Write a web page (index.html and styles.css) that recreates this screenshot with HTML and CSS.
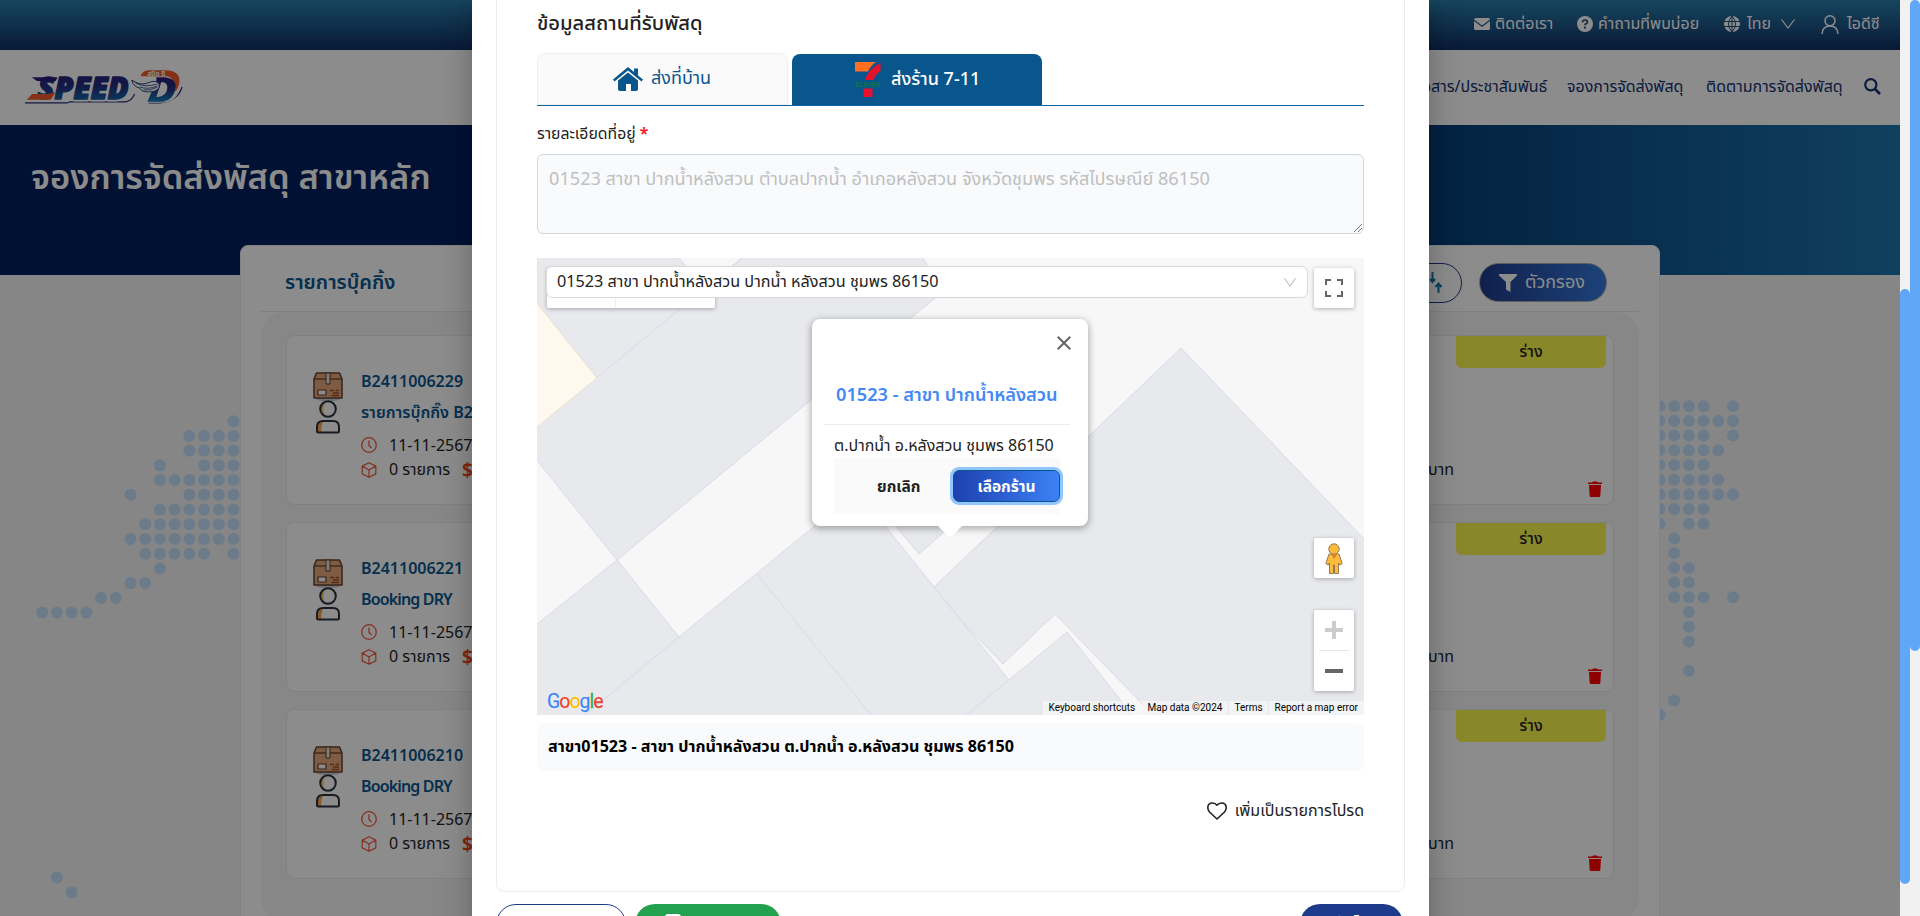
FILE: index.html
```html
<!DOCTYPE html>
<html lang="th">
<head>
<meta charset="utf-8">
<title>SPEED-D</title>
<link rel="stylesheet" href="styles.css">
</head>
<body>
<svg class="defs" width="0" height="0">
  <defs>
    <linearGradient id="ink" x1="0" y1="0" x2="0" y2="1"><stop offset="0" stop-color="#2c1a78"/><stop offset=".5" stop-color="#20307f"/><stop offset="1" stop-color="#1480b8"/></linearGradient>
    <symbol id="parcel" viewBox="0 0 30 29">
      <ellipse cx="15" cy="27" rx="12" ry="2" fill="#c9ccd6"/>
      <path d="M3.5 1h23L29 7v19H1V7z" fill="#e6a77c" stroke="#66402b" stroke-width="1.5" stroke-linejoin="round"/>
      <path d="M1 7h28" stroke="#66402b" stroke-width="1.3"/>
      <path d="M13 1h4v11h-4z" fill="#e8e4da" stroke="#66402b" stroke-width="1"/>
      <path d="M5 18h8v5H5z" fill="#fff" stroke="#66402b" stroke-width="1.2"/>
      <path d="M17 18.500h4m1.500 0H26M20 21h6m-7.500 2.500H26" stroke="#9a4f2c" stroke-width="1.300"/>
    </symbol>
    <symbol id="person" viewBox="0 0 26 34">
      <circle cx="13" cy="9" r="8" fill="#fff"/><path d="M11 1.500a8 8 0 0 0 0 15.200 12 12 0 0 1 0-15.200" fill="#f6c866"/>
      <circle cx="13" cy="9" r="7.800" fill="none" stroke="#2b303d" stroke-width="2"/>
      <path d="M2 31v-4q0-6 6-6h10q6 0 6 6v4q0 1.500-1.500 1.500h-19Q2 32.500 2 31z" fill="#fff"/>
      <path d="M2 31v-4q0-6 6-6-2 5-2 11.500H3.500Q2 32.500 2 31z" fill="#f6a84a"/>
      <path d="M2 31v-4q0-6 6-6h10q6 0 6 6v4q0 1.500-1.500 1.500h-19Q2 32.500 2 31z" fill="none" stroke="#2b303d" stroke-width="2"/>
    </symbol>
    <symbol id="clock" viewBox="0 0 16 16"><circle cx="8" cy="8" r="7.300" fill="none" stroke="#f0593a" stroke-width="1.300"/><path d="M8 3.500v5l2.500 2.500" fill="none" stroke="#f0593a" stroke-width="1.300"/></symbol>
    <symbol id="cube" viewBox="0 0 16 16"><path d="M8 .700l6.800 3.400v7.800L8 15.300l-6.800-3.400V4.100zM1.200 4.100L8 8l6.800-3.900M8 8v7.300" fill="none" stroke="#f0593a" stroke-width="1.200" stroke-linejoin="round"/></symbol>
    <symbol id="trash" viewBox="0 0 14 16"><path d="M0 1.500h4.200L5 .500h4l.800 1H14V3H0zM1 4h12l-.700 11q-.100 1-1.200 1H2.900q-1.100 0-1.200-1z" fill="#ff0000"/></symbol>
  </defs>
</svg>

<div class="page">
  <header class="topbar">
    <div class="tb-item mail"><svg width="16" height="12" viewBox="0 0 16 12" fill="#fff"><path d="M1.500 0h13Q16 0 16 1.500L8 7.500 0 1.500Q0 0 1.500 0z"/><path d="M0 3l8 6 8-6v7.500q0 1.500-1.500 1.500h-13Q0 12 0 10.500z"/></svg><span>ติดต่อเรา</span></div>
    <div class="tb-item faq"><svg width="16" height="16" viewBox="0 0 16 16"><circle cx="8" cy="8" r="8" fill="#fff"/><path d="M5.600 6.300q0-2.300 2.400-2.300t2.400 2q0 1.300-1.500 1.900-.900.400-.9 1.300" fill="none" stroke="#1b4a78" stroke-width="1.700"/><circle cx="8" cy="11.700" r="1.100" fill="#1b4a78"/></svg><span>คำถามที่พบบ่อย</span></div>
    <div class="tb-item lang"><svg width="16" height="16" viewBox="0 0 16 16"><circle cx="8" cy="8" r="8" fill="#fff"/><path d="M0 5.500h16M0 10.500h16M8 0v16M8 0q-7 8 0 16M8 0q7 8 0 16" fill="none" stroke="#1b4a78" stroke-width="1"/></svg><span>ไทย</span><svg class="chev" width="14" height="10" viewBox="0 0 14 10"><path d="M.500.500L7 9 13.500.500" fill="none" stroke="#fff" stroke-width="1.200"/></svg></div>
    <div class="tb-item user"><svg width="18" height="19" viewBox="0 0 18 19"><circle cx="9" cy="5.800" r="5" fill="none" stroke="#fff" stroke-width="1.500"/><path d="M1 19q.500-8 8-8t8 8" fill="none" stroke="#fff" stroke-width="1.500"/></svg><span>ไอดีซี</span></div>
  </header>

  <nav class="nav">
    <svg class="logo" width="158" height="36" viewBox="0 0 160 36">
      <g stroke-linejoin="round">
        <path d="M0 34h43l3-1h56q6-1 9-8M125 34h12q18-2 22-16" fill="none" stroke="#242b74" stroke-width="1.200"/>
        <text x="13" y="30" textLength="92" lengthAdjust="spacingAndGlyphs" class="logo-shadow">SPEED</text>
        <text x="13" y="30" textLength="92" lengthAdjust="spacingAndGlyphs" class="logo-word">SPEED</text>
        <path d="M7 8h26l-2 4H12z" fill="#2c1a78"/>
        <path d="M7 25h16l8-2-5 8H2z" fill="#f0592b"/>
        <path d="M117 7q2-6 9-6h15q18 0 16 17-3 16-19 16h-15" fill="#fff"/>
        <path d="M117 7q2-6 9-6h15q18 0 15 14-1 5-4 8 1-15-9-16z" fill="#f0592b"/>
        <path d="M133 8h8q14 1 11 13-3 12-16 12h-12l2-5h9q8-1 9-8 1-7-6-7l-5 15h-7l7-16z" fill="url(#ink)"/>
        <path d="M108 11q9 6 16 3 9-4 12 1 1 8-11 8-7 0-9-4-6-1-8-8z" fill="#fff" stroke="#24427f" stroke-width="1"/>
        <path d="M112 14q10 5 22 1m-18 3q9 3 18-1m-14 4q8 1 14-3" fill="none" stroke="#24427f" stroke-width=".8"/>
      </g>
      <text x="124" y="6.500" textLength="18" lengthAdjust="spacingAndGlyphs" class="logo-th">สปีด ดี</text>
    </svg>
    <div class="nav-links">
      <a class="n1">ข่าวสาร/ประชาสัมพันธ์</a><a class="n2">จองการจัดส่งพัสดุ</a><a class="n3">ติดตามการจัดส่งพัสดุ</a>
      <svg width="17" height="17" viewBox="0 0 17 17"><circle cx="6.800" cy="6.800" r="5.600" fill="none" stroke="#14306f" stroke-width="2.200"/><path d="M11 11l5 5" stroke="#14306f" stroke-width="2.600"/></svg>
    </div>
  </nav>

  <section class="hero"><h1>จองการจัดส่งพัสดุ สาขาหลัก</h1></section>

  <main class="stage">
    <svg class="dots" width="1900" height="641" viewBox="0 275 1900 641">
      <path transform="translate(42.200 421.200) scale(14.720)" d="M13 0h.1M10 1h3.100M10 2h3.100M8 3h.1M11 3h2.100M8 4h5.100M6 5h.1M10 5h3.100M8 6h5.100M7 7h6.100M6 8h7.100M7 9h4.100M13 9h.1M8 10h.1M6 11h1.100M4 12h1.100M0 13h3.100M1 31h.1M2 32h.1"/>
      <path transform="translate(1659.500 406.200) scale(14.700)" d="M0 0h3.100M5 0h.1M0 1h5.100M0 2h3.100M5 2h.1M0 3h4.100M0 4h3.100M0 5h4.100M0 6h5.100M0 7h3.100M0 8h.1M2 8h1.100M1 9h.1M1 10h.1M1 11h1.100M1 12h1.100M1 13h2.100M5 13h.1M2 14h.1M2 15h.1M2 16h.1M2 18h.1M1 20h.1M0 21h.1"/>
    </svg>
    <div class="panel">
      <div class="panel-head">
        <h2>รายการบุ๊คกิ้ง</h2>
        <div class="sort"><svg width="12" height="22" viewBox="0 0 12 22" fill="none" stroke="#1577a5" stroke-width="2"><path d="M2.500 0v10M0 7l2.500 3L5 7M8.500 21V12M5.500 15l3-3.500 3 3.500"/></svg></div>
        <div class="filter"><svg width="18" height="18" viewBox="0 0 18 18" fill="#fff"><path d="M0 0h18v1.500L11.500 8v10L7 15.500V8L0 1.500z"/></svg><span>ตัวกรอง</span></div>
      </div>
      <div class="list">
        <article class="booking">
          <div class="icons"><svg width="30" height="29"><use href="#parcel"/></svg><svg width="26" height="34"><use href="#person"/></svg></div>
          <div class="info"><b>B2411006229</b><b class="name">รายการบุ๊กกิ๊ง B2411006229</b><p><svg width="16" height="16"><use href="#clock"/></svg>11-11-2567</p><p class="sum"><svg width="16" height="16"><use href="#cube"/></svg><span>0 รายการ</span><i>$</i></p></div>
          <div class="side"><div class="tag">ร่าง</div><span class="baht">บาท</span><svg class="bin" width="14" height="16"><use href="#trash"/></svg></div>
        </article>
        <article class="booking">
          <div class="icons"><svg width="30" height="29"><use href="#parcel"/></svg><svg width="26" height="34"><use href="#person"/></svg></div>
          <div class="info"><b>B2411006221</b><b class="name latin">Booking DRY</b><p><svg width="16" height="16"><use href="#clock"/></svg>11-11-2567</p><p class="sum"><svg width="16" height="16"><use href="#cube"/></svg><span>0 รายการ</span><i>$</i></p></div>
          <div class="side"><div class="tag">ร่าง</div><span class="baht">บาท</span><svg class="bin" width="14" height="16"><use href="#trash"/></svg></div>
        </article>
        <article class="booking">
          <div class="icons"><svg width="30" height="29"><use href="#parcel"/></svg><svg width="26" height="34"><use href="#person"/></svg></div>
          <div class="info"><b>B2411006210</b><b class="name latin">Booking DRY</b><p><svg width="16" height="16"><use href="#clock"/></svg>11-11-2567</p><p class="sum"><svg width="16" height="16"><use href="#cube"/></svg><span>0 รายการ</span><i>$</i></p></div>
          <div class="side"><div class="tag">ร่าง</div><span class="baht">บาท</span><svg class="bin" width="14" height="16"><use href="#trash"/></svg></div>
        </article>
      </div>
    </div>
  </main>
</div>

<div class="overlay">
  <div class="modal">
    <section class="box">
      <h3>ข้อมูลสถานที่รับพัสดุ</h3>
      <div class="tabs">
        <div class="tab home"><svg width="30" height="24" viewBox="0 0 30 24" fill="#09568d"><path d="M15 0l6 5V1.500h4v7l5 4-1.500 2L15 3.500 1.500 14.500 0 12.500z"/><path d="M15 5.500l10 8V22q0 2-2 2h-5v-7h-5v7H7q-2 0-2-2v-8.500z"/></svg><span>ส่งที่บ้าน</span></div>
        <div class="tab store"><svg width="26" height="35" viewBox="0 0 26 35"><path d="M0 0h21q-5 3-8 9.500H0z" fill="#ff6f1f"/><path d="M25.500 1v8q-5 3-7 9H10Q13 7 25.500 1zM8.500 26.500h9V35h-9z" fill="#e8112d"/><text x="0.500" y="25" textLength="25" lengthAdjust="spacingAndGlyphs" class="eleven">ELEVEN</text></svg><span>ส่งร้าน 7-11</span></div>
      </div>
      <label>รายละเอียดที่อยู่ <em>*</em></label>
      <div class="area"><span>01523 สาขา ปากน้ำหลังสวน ตำบลปากน้ำ อำเภอหลังสวน จังหวัดชุมพร รหัสไปรษณีย์ 86150</span><svg width="8" height="8" viewBox="0 0 8 8"><path d="M0 8l8-8M4 8l4-4" stroke="#777" stroke-width="1"/></svg></div>

      <div class="map">
        <svg class="land" width="827" height="457" viewBox="537 258 827 457">
          <g fill="#e8e9ed" stroke="#d9dae9" stroke-width="1">
            <path d="M537 250H673L704 290 743 258 751 250H917L945 290 812 399 617 560 536 459z"/>
            <path d="M536 625L617 560 679 637 584 716H536z"/>
            <path d="M584 716L679 637 850 497H862L934 587 1009 680 965 716z"/>
            <path d="M889 518L919 554 960 518z"/>
            <path d="M934 587L998 526 1088 437 1181 348 1365 540V716H1154L1055 614 1003 664 965 625z"/>
            <path d="M965 716L1009 680 1067 632 1133 716z"/>
            <path d="M757 574L872 716M751 250L537 427" fill="none"/>
          </g>
          <path d="M536 302L597 378 536 428z" fill="#fef8ee" stroke="#e9e0cf"/>
        </svg>
        <div class="maptype"><i></i><i></i></div>
        <div class="select"><span>01523 สาขา ปากน้ำหลังสวน ปากน้ำ หลังสวน ชุมพร 86150</span><svg width="12" height="9" viewBox="0 0 12 9"><path d="M.500.500L6 8 11.500.500" fill="none" stroke="#bfbfbf" stroke-width="1.200"/></svg></div>
        <div class="ctl full"><svg width="18" height="18" viewBox="0 0 18 18" fill="none" stroke="#666" stroke-width="2"><path d="M1 6V1h5M12 1h5v5M17 12v5h-5M6 17H1v-5"/></svg></div>
        <div class="ctl peg"><svg width="18" height="31" viewBox="0 0 18 31"><g fill="#fbbc3d" stroke="#937a52" stroke-width="1"><path d="M4 11h10l3.200 9.500-2.500 1.500-1.200-2V30.500h-4V22h-1v8.500h-4V20l-1.200 2L.800 20.500z"/><circle cx="9" cy="6" r="5.200"/></g><path d="M6 11h6l-3 5z" fill="#e07a30"/></svg></div>
        <div class="ctl zoom"><svg width="18" height="18" viewBox="0 0 18 18"><path d="M7 0h4v7h7v4h-7v7H7v-7H0V7h7z" fill="#ccc"/></svg><hr><svg width="18" height="18" viewBox="0 0 18 18"><path d="M0 7h18v4H0z" fill="#666"/></svg></div>
        <div class="google"><span class="gb">G</span><span class="gr">o</span><span class="gy">o</span><span class="gb">g</span><span class="gg">l</span><span class="gr">e</span></div>
        <div class="credits"><span class="c1">Keyboard shortcuts</span><span class="c2">Map data ©2024</span><span class="c3">Terms</span><span class="c4">Report a map error</span></div>
        <div class="bubble">
          <svg class="x" width="14" height="14" viewBox="0 0 14 14"><path d="M.700.700l12.600 12.600M13.300.700L.700 13.300" stroke="#666" stroke-width="2"/></svg>
          <h4>01523 - สาขา ปากน้ำหลังสวน</h4>
          <p>ต.ปากน้ำ อ.หลังสวน ชุมพร 86150</p>
          <div class="actions"><span class="cancel">ยกเลิก</span><span class="pick">เลือกร้าน</span></div>
          <svg class="tail" width="24" height="12" viewBox="0 0 24 12"><path d="M0 0h24L14 10q-2 2-4 0z" fill="#fff"/></svg>
        </div>
      </div>

      <div class="branch"><span>สาขา01523 - สาขา ปากน้ำหลังสวน ต.ปากน้ำ อ.หลังสวน ชุมพร 86150</span></div>
      <div class="fav"><svg width="20" height="18" viewBox="0 0 20 18"><path d="M10 17L2.500 10Q.800 8 .800 5.700.800 1 5.500 1 8.500 1 10 3.200 11.500 1 14.500 1q4.700 0 4.700 4.700 0 2.300-1.700 4.300z" fill="none" stroke="#222" stroke-width="1.600" stroke-linejoin="round"/></svg><span>เพิ่มเป็นรายการโปรด</span></div>
    </section>
    <footer class="foot">
      <div class="btn back">ย้อนกลับ</div>
      <div class="btn save"><svg width="16" height="16" viewBox="0 0 16 16"><rect width="16" height="16" rx="3" fill="#fff"/></svg><span>บันทึกร่าง</span></div>
      <div class="btn next">ถัดไป</div>
    </footer>
  </div>
  <div class="bar inner"><i></i></div>
</div>
<div class="bar outer"><i></i></div>
</body>
</html>
```
FILE: styles.css
```css
*{box-sizing:border-box}
html,body{margin:0;height:916px;overflow:hidden}
body{font-family:"Noto Sans","Noto Sans Thai","Noto Sans Thai UI",sans-serif;font-size:16px;color:#222;background:#f4f4f4;position:relative}
h1,h2,h3,h4,p{margin:0}
svg{display:block;flex:none;overflow:visible}
span,b,a,h1,h2,h3,h4,label{white-space:nowrap}
.defs{position:absolute}
.page{width:1900px;height:916px;overflow:hidden;background:#f4f4f4}

.topbar{height:50px;background:linear-gradient(#287fab,#102d64);display:flex;justify-content:flex-end;padding:0 20px 2px 0;color:#fff}
.tb-item{display:flex;align-items:center;gap:5px}
.mail{width:103px}.faq{width:147px}.lang{width:97px;gap:7px}.user{width:59px;gap:8px}
.lang span{width:27px}
.nav{height:75px;background:#fff;display:flex;justify-content:space-between;align-items:center;padding:0 19px 2px 25px}
.logo-word,.logo-shadow{font:italic 900 30px "Open Sans","Noto Sans",sans-serif}
.logo-word{fill:url(#ink);stroke:url(#ink);stroke-width:1.500}
.logo-shadow{fill:#fff;stroke:#fff;stroke-width:5}
.logo-th{font-size:7px;fill:#fff;font-weight:700}
.nav-links{display:flex;align-items:center;color:#14306f}
.n1{width:159px}.n2{width:139px}.n3{width:158px}
.hero{height:150px;padding:26px 31px;background:linear-gradient(90deg,#001f5c 0 50%,#053e78 76%,#1d74ad);color:#fff}
.hero h1{font-size:34.500px;line-height:50px;font-weight:600}

.stage{position:relative;height:641px;display:flex;justify-content:center;align-items:flex-start}
.dots{position:absolute;left:0;top:0}
.dots path{fill:none;stroke:#c3e0f9;stroke-width:.82;stroke-linecap:round;stroke-dasharray:0 1}
.panel{position:relative;width:1420px;height:720px;margin-top:-30px;background:#fff;border:1px solid #eee;border-radius:8px;padding:0 20px}
.panel-head{height:66px;display:flex;align-items:center;border-bottom:1px solid #e8e8e8;padding:8px 32px 0 24px}
.panel-head h2{font-size:20px;font-weight:600;color:#09568d;margin-right:auto}
.sort{width:72px;height:40px;border:1.500px solid #1e3a8a;border-radius:20px;padding:8px 0 0 39px;margin-right:17px}
.filter{width:128px;height:39px;border-radius:20px;background:linear-gradient(90deg,#1e3a8a,#3478dc);border:1px solid #aaa;color:#fff;font-size:18px;display:flex;align-items:center;gap:8px;padding-left:19px}
.list{background:#f5f5f5;border-radius:24px;height:610px;padding:23px 25px;display:flex;flex-direction:column;gap:17px}
.booking{height:170px;flex:none;background:#fff;border:1px solid #e9e9e9;border-radius:8px;display:flex;padding-left:26px}
.icons{width:48px;padding-top:36px;display:flex;flex-direction:column;align-items:flex-start}
.icons svg+svg{margin:-1px 0 0 2px}
.info{padding-top:33px;display:flex;flex-direction:column;width:600px}
.info b{font-size:16px;font-weight:600;line-height:24px;color:#09568d}
.info .name{margin:7px 0 8px}
.info .latin{letter-spacing:-.85px}
.info p{display:flex;align-items:center;height:25px;gap:12px;font-size:16px}
.info i{font-style:normal;font-weight:700;color:#f0451f;font-size:19px}
.side{margin-left:auto;width:185px;display:grid;grid-template:32px 113px 1fr / 28px 150px;padding-right:7px}
.tag{grid-column:2;background:#f8f54c;border-radius:0 0 6px 6px;text-align:center;line-height:31px;font-weight:500;font-size:16px}
.baht{grid-area:2/1;align-self:end;font-size:16px;line-height:24px}
.bin{grid-area:3/2;justify-self:end;margin:0 4px 0 0}

.overlay{position:absolute;left:0;top:0;width:1910px;height:916px;background:linear-gradient(90deg,rgba(0,0,0,.45) 1900px,transparent 0);overflow:hidden}
.modal{margin-left:472px;width:957px;height:960px;background:#fff;padding:0 24px;box-shadow:0 6px 16px rgba(0,0,0,.12),0 9px 28px 8px rgba(0,0,0,.12)}
.box{height:892px;width:909px;border:1px solid #ececec;border-top:0;border-radius:0 0 8px 8px;padding:0 40px;display:flex;flex-direction:column}
.box h3{font-size:20.200px;font-weight:500;line-height:30px;margin-top:7px}
.tabs{margin-top:16px;height:53px;border-bottom:1px solid #0c63a4;display:flex;align-items:flex-end;gap:4px}
.tab{width:250px;height:51px;border-radius:8px 8px 0 0;display:flex;align-items:center;font-size:18px;gap:8px}
.tab span{padding-bottom:1px}
.home{width:251px;height:52px;border:1px solid #efefef;background:#fafafa;color:#09568d;padding-left:75px}
.store{background:#09568d;color:#fff;font-weight:500;padding-left:63px;gap:10px}
.eleven{font:700 8px "Liberation Sans",sans-serif;fill:#147350}
label{margin-top:15px;line-height:24px;font-size:15.800px}
label em{color:#f5222d;font-style:normal;font-weight:700}
.area{margin-top:9px;height:80px;border:1px solid #d3d6db;border-radius:6px;background:#f9fafc;padding:7px 1px 1px 11px;color:#bfbfbf;font-size:18.150px;line-height:32px;display:flex;justify-content:space-between;align-items:flex-start}
.area svg{align-self:flex-end}
.map{position:relative;margin-top:24px;height:457px;background:#f7f7f7;overflow:hidden}
.land{position:absolute;left:0;top:0}
.maptype{position:absolute;left:10px;top:10px;width:168px;height:40px;display:flex;gap:1px;box-shadow:0 1px 4px rgba(0,0,0,.3);background:#eee;border-radius:2px;overflow:hidden}
.maptype i{background:#fff;flex:1}.maptype i:first-child{flex:0 0 68px}
.select{position:absolute;left:9px;top:8px;width:762px;height:32px;background:#fff;border:1px solid #d9d9d9;border-radius:6px;display:flex;align-items:center;justify-content:space-between;padding:0 11px 0 10px;font-size:16.200px}
.ctl{position:absolute;left:777px;width:40px;height:40px;background:#fff;border-radius:2px;box-shadow:0 1px 4px rgba(0,0,0,.3);display:flex;align-items:center;justify-content:center}
.full{top:10px}.peg{top:280px}.zoom{top:352px;height:81px;flex-direction:column;justify-content:space-between;padding:11px 0}
.zoom hr{width:30px;border:0;height:1px;background:#e6e6e6;margin:0}
.google{position:absolute;left:10px;top:431px;font:400 19.500px/26px "Roboto",sans-serif;letter-spacing:-1px;-webkit-text-stroke:.3px;text-shadow:0 0 1px #fff,0 0 2px #fff}
.gb{color:#4285f4}.gr{color:#ea4335}.gy{color:#fbbc05}.gg{color:#34a853}
.credits{position:absolute;right:0;bottom:0;height:14px;display:flex;gap:1px;font:10px/14px Roboto,sans-serif;color:#000}
.credits span{background:rgba(245,245,245,.75);padding-left:5.500px}
.c1{width:98px}.c2{width:86px}.c3{width:39px}.c4{width:95px}
.bubble{position:absolute;left:275px;top:61px;width:276px;height:207px;border-radius:8px;background:#fff;box-shadow:0 2px 7px 1px rgba(0,0,0,.3);padding:56px 18px 0 12px}
.x{position:absolute;right:17px;top:17px}
.bubble h4{height:50px;line-height:38px;font-size:18.200px;font-weight:600;color:#4389f5;border-bottom:1px solid #eee;padding-left:12px}
.bubble p{line-height:24px;padding:8px 0 1px 10px;font-size:16px}
.actions{margin:0 10px 0 10px;width:226px;height:56px;background:#fafafa;display:flex;align-items:center;font-weight:700;font-size:15.500px}
.cancel{width:119px;padding:2px 0 0 43px}
.pick{width:107px;height:32px;border-radius:6px;border:1px solid #09568d;background:linear-gradient(90deg,#1e40af,#3b82f6);box-shadow:0 0 0 3px #91c6fd;color:#fff;text-align:center;line-height:30px}
.tail{position:absolute;left:126px;top:207px}
.branch{margin-top:8px;height:48px;border-radius:8px;background:#f9fafc;display:flex;align-items:center;padding-left:11px;font-weight:700;color:#000;font-size:16.100px}
.fav{margin-top:27px;height:26px;display:flex;gap:8px;align-items:center;justify-content:flex-end;font-size:16px}
.foot{margin-top:12px;display:flex;gap:9px}
.btn{height:40px;border-radius:20px;font-size:16px;font-weight:500;display:flex;align-items:center;justify-content:center;gap:8px;line-height:24px;padding-bottom:1px}
.back{width:130px;border:1px solid #1e3a8a;color:#1e3a8a}
.save{width:146px;background:#22a24f;color:#fff}
.save svg{margin-bottom:3px}
.next{width:103px;background:#1e3a8a;color:#fff;margin:0 2px 0 auto;padding-bottom:4px}
.bar{position:absolute;top:0;width:10px;height:916px;background:#f1f1f1}
.bar i{display:block;border-radius:5px;background:#60a7f8}
.inner{left:1900px;padding-top:289px}.inner i{height:595px}
.outer{left:1910px}.outer i{height:651px}
```
